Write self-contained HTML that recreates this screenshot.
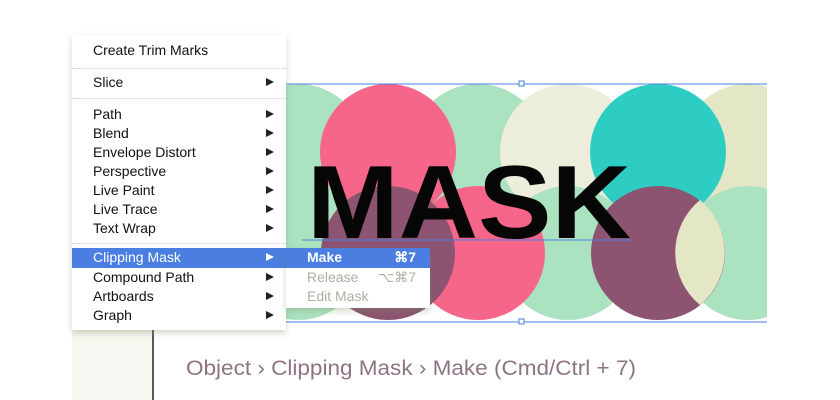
<!DOCTYPE html>
<html><head><meta charset="utf-8"><style>
body{margin:0;width:840px;height:400px;background:#fff;position:relative;overflow:hidden;font-family:"Liberation Sans",sans-serif}
.menu{position:absolute;left:72px;top:35px;width:214px;height:295px;background:#fff;box-shadow:0 3px 6px rgba(120,140,100,.35)}
.it{position:absolute;left:0;width:214px;height:19px;font-size:14px;line-height:19px;color:#111}
.it span{position:absolute;left:21px}
.it i{position:absolute;right:12px;top:5px;width:0;height:0;border-left:8px solid #222;border-top:4.5px solid transparent;border-bottom:4.5px solid transparent}
.sep{position:absolute;left:0;width:214px;border-top:1px dotted #ccc}
.hl{background:#4a7ee0;color:#fff}
.hl i{border-left-color:#fff}
.sub{position:absolute;left:286px;top:248px;width:144px;height:60px;background:#fff;box-shadow:0 3px 6px rgba(120,140,100,.35)}
.sub .it{width:144px}
.sub .it span{left:21px}
.sub .it b{position:absolute;right:14px;font-weight:normal}
.dis{color:#aab0a0}
</style></head><body>
<svg width="840" height="400" style="position:absolute;left:0;top:0">
<defs><clipPath id="c"><rect x="286" y="84" width="481" height="238"/></clipPath></defs>
<rect x="72" y="330" width="81" height="70" fill="#f7f6f0"/>
<line x1="153" y1="325" x2="153" y2="400" stroke="#222" stroke-width="1.5"/>
<g clip-path="url(#c)">
<circle cx="298" cy="152" r="68" fill="#abe3c0"/>
<circle cx="478" cy="152" r="68" fill="#abe3c0"/>
<circle cx="568" cy="152" r="68" fill="#eceedb"/>
<circle cx="748" cy="152" r="68" fill="#e4e7c6"/>
<circle cx="388" cy="152" r="68" fill="#f6668a"/>
<circle cx="658" cy="152" r="68" fill="#2ecdc4"/>
<rect x="286" y="188" width="40" height="32" fill="#2ecdc4"/>
<circle cx="298" cy="253" r="67" fill="#abe3c0"/>
<circle cx="568" cy="253" r="67" fill="#abe3c0"/>
<circle cx="748" cy="253" r="67" fill="#abe3c0"/>
<circle cx="478" cy="253" r="67" fill="#f6668a"/>
<circle cx="388" cy="253" r="67" fill="#8c5470"/>
<circle cx="658" cy="253" r="67" fill="#8c5470"/>
<path d="M700 200 A68 68 0 0 1 700 305 A68 68 0 0 1 700 200Z" fill="#e4e7c6"/>
</g>
<line x1="286" y1="84" x2="767" y2="84" stroke="#4a7ee0"/>
<line x1="286" y1="322" x2="767" y2="322" stroke="#4a7ee0"/>
<line x1="302" y1="240" x2="632" y2="240" stroke="#4a7ee0"/>
<rect x="519" y="81" width="5" height="5" fill="#fff" stroke="#4a7ee0"/>
<rect x="519" y="319" width="5" height="5" fill="#fff" stroke="#4a7ee0"/>
<text x="307" y="238" font-family="Liberation Sans" font-weight="bold" font-size="104" fill="#060606" textLength="324" lengthAdjust="spacingAndGlyphs">MASK</text>
<text x="186" y="375" font-family="Liberation Sans" font-size="21" fill="#8e7482" textLength="450" lengthAdjust="spacingAndGlyphs">Object › Clipping Mask › Make (Cmd/Ctrl + 7)</text>
</svg>
<div class="menu">
<div class="it" style="top:6px"><span>Create Trim Marks</span></div>
<div class="sep" style="top:33px"></div>
<div class="it" style="top:38px"><span>Slice</span><i></i></div>
<div class="sep" style="top:63px"></div>
<div class="it" style="top:70px"><span>Path</span><i></i></div>
<div class="it" style="top:89px"><span>Blend</span><i></i></div>
<div class="it" style="top:108px"><span>Envelope Distort</span><i></i></div>
<div class="it" style="top:127px"><span>Perspective</span><i></i></div>
<div class="it" style="top:146px"><span>Live Paint</span><i></i></div>
<div class="it" style="top:165px"><span>Live Trace</span><i></i></div>
<div class="it" style="top:184px"><span>Text Wrap</span><i></i></div>
<div class="sep" style="top:208px"></div>
<div class="it hl" style="top:213px;height:20px"><span>Clipping Mask</span><i></i></div>
<div class="it" style="top:233px"><span>Compound Path</span><i></i></div>
<div class="it" style="top:252px"><span>Artboards</span><i></i></div>
<div class="it" style="top:271px"><span>Graph</span><i></i></div>
</div>
<div class="sub">
<div class="it hl" style="top:0;height:20px"><span style="font-weight:bold">Make</span><b style="font-weight:bold">⌘7</b></div>
<div class="it dis" style="top:20px"><span>Release</span><b>⌥⌘7</b></div>
<div class="it dis" style="top:39px"><span>Edit Mask</span></div>
</div>
</body></html>
